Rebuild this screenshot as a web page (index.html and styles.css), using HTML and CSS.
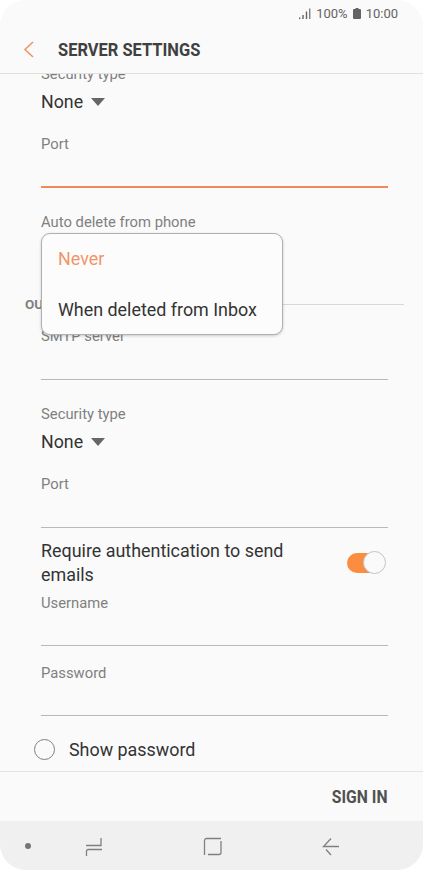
FILE: index.html
```html
<!DOCTYPE html>
<html lang="en">
<head>
    <meta charset="UTF-8">
    <meta name="viewport" content="width=device-width, initial-scale=1.0">
    <title>Server Settings</title>
    <link rel="stylesheet" href="styles.css">
</head>
<body>
    <div class="phone">
        <div class="status-bar">
            <svg class="signal" width="12" height="12" viewBox="0 0 12 12">
                <rect x="0" y="9.5" width="1.4" height="1.5"/>
                <rect x="3.3" y="7" width="1.4" height="4"/>
                <rect x="6.8" y="3.5" width="1.4" height="7.5"/>
                <rect x="10" y="0.5" width="1.4" height="10.5" opacity="0.8"/>
            </svg>
            <span class="status-text">100%</span>
            <svg class="battery" width="8" height="11" viewBox="0 0 8 11">
                <path d="M2.5 0h3v1H7a1 1 0 0 1 1 1v8a1 1 0 0 1-1 1H1a1 1 0 0 1-1-1V2a1 1 0 0 1 1-1h1.500z"/>
            </svg>
            <span class="status-text">10:00</span>
        </div>

        <div class="header">
            <svg class="back" width="11" height="17" viewBox="0 0 11 17">
                <path d="M10 1L2 8.500L10 16"/>
            </svg>
            <h1 class="title">SERVER SETTINGS</h1>
        </div>

        <div class="scroll">
            <div class="content">
                <div class="field-label">Security type</div>
                <div class="select-value">None <span class="caret"></span></div>

                <div class="field-label field-gap">Port</div>
                <div class="input-line active"></div>

                <div class="field-label field-gap-lg">Auto delete from phone</div>
                <div class="select-value select-tall">Never <span class="caret"></span></div>

                <div class="section-row">
                    <span class="section-name">OUTGOING SERVER SETTINGS</span>
                    <span class="section-rule"></span>
                </div>

                <div class="field-label smtp">SMTP server</div>
                <div class="input-line"></div>

                <div class="field-label field-gap-lg">Security type</div>
                <div class="select-value">None <span class="caret"></span></div>

                <div class="field-label field-gap">Port</div>
                <div class="input-line"></div>

                <div class="switch-row">
                    <div class="switch-text">Require authentication to send emails</div>
                    <div class="switch"><span class="knob"></span></div>
                </div>

                <div class="field-label username">Username</div>
                <div class="input-line short"></div>

                <div class="field-label field-gap-pw">Password</div>
                <div class="input-line short"></div>

                <div class="check-row">
                    <span class="radio"></span>
                    <span class="check-text">Show password</span>
                </div>
            </div>

            <div class="popup">
                <div class="popup-item selected">Never</div>
                <div class="popup-item">When deleted from Inbox</div>
            </div>
        </div>

        <div class="footer">
            <span class="sign-in">SIGN IN</span>
        </div>

        <div class="nav-bar">
            <span class="nav-dot"></span>
            <svg class="nav-icon" width="18" height="21" viewBox="0 0 18 21">
                <path d="M1 10.500H16V3M17 14.500H3a1.500 1.500 0 0 0-1.500 1.500V21"/>
            </svg>
            <svg class="nav-icon" width="19" height="21" viewBox="0 0 19 21">
                <path d="M18 3.500H3.500a2 2 0 0 0-2 2V20M5 19.500H16a2 2 0 0 0 2-2V6"/>
            </svg>
            <svg class="nav-icon" width="18" height="21" viewBox="0 0 18 21">
                <path d="M17 11.500H1.500L9 3.500M4 14.500L9 20"/>
            </svg>
        </div>
    </div>
</body>
</html>
```

FILE: styles.css
```css
* {
    margin: 0;
    padding: 0;
    box-sizing: border-box;
}

body {
    font-family: Roboto, 'Liberation Sans', sans-serif;
    background: #ffffff;
}

.phone {
    width: 423px;
    height: 870px;
    background: #fafafa;
    border-radius: 26px;
    overflow: hidden;
    display: flex;
    flex-direction: column;
}

.status-bar {
    height: 27px;
    flex: none;
    display: flex;
    align-items: center;
    justify-content: flex-end;
    gap: 5px;
    padding-right: 25px;
    color: #636363;
    font-size: 13px;
}

.signal,
.battery {
    fill: #636363;
}

.header {
    height: 47px;
    flex: none;
    display: flex;
    align-items: center;
    padding: 0 0 1px 23px;
    border-bottom: 1px solid #e0e0e0;
}

.back {
    fill: none;
    stroke: #f0956b;
    stroke-width: 1.6;
}

.title {
    margin-left: 24px;
    font-size: 18.5px;
    font-weight: 700;
    color: #404040;
    transform: scaleX(0.89);
    transform-origin: left center;
    white-space: nowrap;
}

.scroll {
    position: relative;
    flex: 1;
    overflow: hidden;
}

.content {
    margin-top: -9px;
    padding: 0 35px 0 41px;
}

.field-label {
    height: 20px;
    line-height: 18px;
    font-size: 14.8px;
    color: #808080;
}

.field-gap {
    margin-top: 19px;
}

.field-gap-lg {
    margin-top: 25px;
}

.field-gap-pw {
    margin-top: 18px;
}

.select-value {
    height: 28px;
    margin-top: 3px;
    line-height: 28px;
    font-size: 17.8px;
    color: #333333;
    display: flex;
    align-items: center;
    gap: 8px;
}

.select-tall {
    margin-top: 11px;
}

.caret {
    width: 0;
    height: 0;
    border-left: 7px solid transparent;
    border-right: 7px solid transparent;
    border-top: 8px solid #666666;
}

.input-line {
    height: 33px;
    border-bottom: 1px solid #b8b8b8;
}

.input-line.active {
    border-bottom: 2px solid #f08a5d;
}

.input-line.short {
    height: 32px;
}

.section-row {
    display: flex;
    align-items: center;
    height: 20px;
    margin: 22px -16px 0 -16px;
    gap: 8px;
}

.section-name {
    font-size: 13.5px;
    font-weight: 700;
    color: #808080;
    white-space: nowrap;
}

.section-rule {
    flex: 1;
    height: 1px;
    background: #d8d8d8;
}

.smtp {
    margin-top: 13px;
}

.switch-row {
    display: flex;
    align-items: center;
    justify-content: space-between;
    margin-top: 11px;
}

.switch-text {
    width: 260px;
    font-size: 17.9px;
    line-height: 23.5px;
    color: #333333;
}

.switch {
    position: relative;
    width: 38px;
    height: 20px;
    margin-right: 3px;
    background: #fb8d41;
    border-radius: 10px;
}

.knob {
    position: absolute;
    right: -1px;
    top: -1.5px;
    width: 23px;
    height: 23px;
    background: #fafafa;
    border: 1px solid #c4c4c4;
    border-radius: 50%;
}

.username {
    margin-top: 8px;
}

.check-row {
    display: flex;
    align-items: center;
    gap: 14px;
    margin: 21px 0 0 -7px;
    height: 24px;
}

.radio {
    width: 21px;
    height: 21px;
    border: 1.5px solid #808080;
    border-radius: 50%;
}

.check-text {
    font-size: 17.9px;
    color: #333333;
}

.popup {
    position: absolute;
    left: 41px;
    top: 159px;
    width: 242px;
    height: 102px;
    background: #fcfcfc;
    border: 1px solid #b0b0b0;
    border-radius: 9px;
    box-shadow: 0 1px 3px rgba(0, 0, 0, 0.2);
}

.popup-item {
    height: 51px;
    line-height: 49px;
    padding-left: 16px;
    font-size: 17.9px;
    color: #333333;
    white-space: nowrap;
}

.popup-item.selected {
    color: #f0956b;
}

.footer {
    height: 50px;
    flex: none;
    display: flex;
    align-items: center;
    justify-content: flex-end;
    padding-right: 35px;
    border-top: 1px solid #e4e4e4;
}

.sign-in {
    font-size: 18.5px;
    font-weight: 700;
    color: #505050;
    transform: scaleX(0.85);
    transform-origin: right center;
}

.nav-bar {
    height: 49px;
    flex: none;
    display: flex;
    align-items: center;
    gap: 100px;
    padding-left: 25px;
    background: #f0f0f0;
}

.nav-dot {
    width: 6px;
    height: 6px;
    margin-right: -46px;
    background: #757575;
    border-radius: 50%;
}

.nav-icon {
    fill: none;
    stroke: #808080;
    stroke-width: 1.3;
}
```
